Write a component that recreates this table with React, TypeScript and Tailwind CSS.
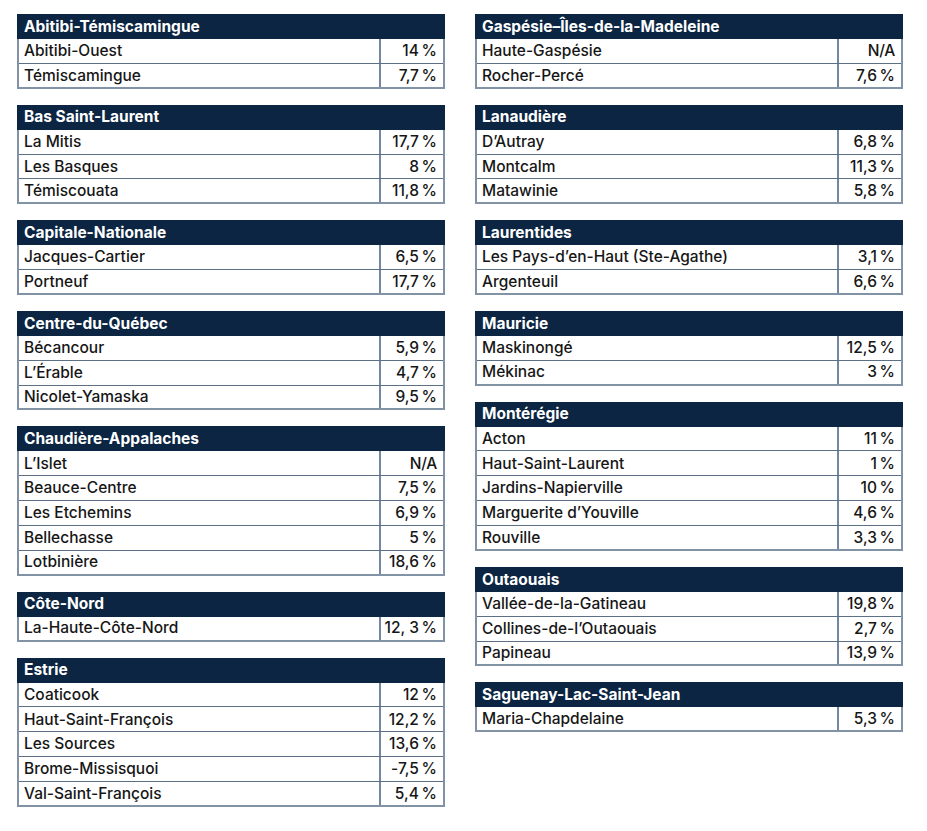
import React from "react";

type Region = { name: string; rows: [string, string][] };

const left: Region[] = [
  { name: "Abitibi-Témiscamingue", rows: [["Abitibi-Ouest", "14 %"], ["Témiscamingue", "7,7 %"]] },
  { name: "Bas Saint-Laurent", rows: [["La Mitis", "17,7 %"], ["Les Basques", "8 %"], ["Témiscouata", "11,8 %"]] },
  { name: "Capitale-Nationale", rows: [["Jacques-Cartier", "6,5 %"], ["Portneuf", "17,7 %"]] },
  { name: "Centre-du-Québec", rows: [["Bécancour", "5,9 %"], ["L’Érable", "4,7 %"], ["Nicolet-Yamaska", "9,5 %"]] },
  {
    name: "Chaudière-Appalaches",
    rows: [["L’Islet", "N/A"], ["Beauce-Centre", "7,5 %"], ["Les Etchemins", "6,9 %"], ["Bellechasse", "5 %"], ["Lotbinière", "18,6 %"]],
  },
  { name: "Côte-Nord", rows: [["La-Haute-Côte-Nord", "12, 3 %"]] },
  {
    name: "Estrie",
    rows: [["Coaticook", "12 %"], ["Haut-Saint-François", "12,2 %"], ["Les Sources", "13,6 %"], ["Brome-Missisquoi", "-7,5 %"], ["Val-Saint-François", "5,4 %"]],
  },
];

const right: Region[] = [
  { name: "Gaspésie–Îles-de-la-Madeleine", rows: [["Haute-Gaspésie", "N/A"], ["Rocher-Percé", "7,6 %"]] },
  { name: "Lanaudière", rows: [["D’Autray", "6,8 %"], ["Montcalm", "11,3 %"], ["Matawinie", "5,8 %"]] },
  { name: "Laurentides", rows: [["Les Pays-d’en-Haut (Ste-Agathe)", "3,1 %"], ["Argenteuil", "6,6 %"]] },
  { name: "Mauricie", rows: [["Maskinongé", "12,5 %"], ["Mékinac", "3 %"]] },
  {
    name: "Montérégie",
    rows: [["Acton", "11 %"], ["Haut-Saint-Laurent", "1 %"], ["Jardins-Napierville", "10 %"], ["Marguerite d’Youville", "4,6 %"], ["Rouville", "3,3 %"]],
  },
  { name: "Outaouais", rows: [["Vallée-de-la-Gatineau", "19,8 %"], ["Collines-de-l’Outaouais", "2,7 %"], ["Papineau", "13,9 %"]] },
  { name: "Saguenay-Lac-Saint-Jean", rows: [["Maria-Chapdelaine", "5,3 %"]] },
];

const RegionTable = ({ region }: { region: Region }) => (
  <div className="w-full">
    <div className="h-[25px] bg-[#0b2542] px-[7px] flex items-center text-white font-bold text-[15.5px]">
      {region.name}
    </div>
    <div className="border-x-2 border-[#8393a6]">
      {region.rows.map(([label, value], i) => (
        <div
          key={i}
          className={`flex h-[24.85px] border-b ${i === region.rows.length - 1 ? "border-b-2 border-[#8393a6]" : "border-[#5d6f85]"}`}
        >
          <div className="flex-1 flex items-center pl-[5px] whitespace-nowrap">{label}</div>
          <div className="w-[64px] border-l-2 border-[#7387a0] flex items-center justify-end pr-[6px] whitespace-nowrap tracking-[-0.3px]">
            {value.replace(" %", "\u202F%")}
          </div>
        </div>
      ))}
    </div>
  </div>
);

export default function App() {
  return (
    <div
      className="w-[927px] h-[831px] bg-white text-[#161616] text-[15.5px] font-medium leading-none"
      style={{ fontFamily: "Inter, 'Noto Sans', sans-serif" }}
    >
      <div className="flex gap-[30px] pl-[17px] pt-[14px]">
        <div className="w-[428px] flex flex-col gap-[16px]">
          {left.map((r) => (
            <RegionTable key={r.name} region={r} />
          ))}
        </div>
        <div className="w-[428px] flex flex-col gap-[16px]">
          {right.map((r) => (
            <RegionTable key={r.name} region={r} />
          ))}
        </div>
      </div>
    </div>
  );
}
